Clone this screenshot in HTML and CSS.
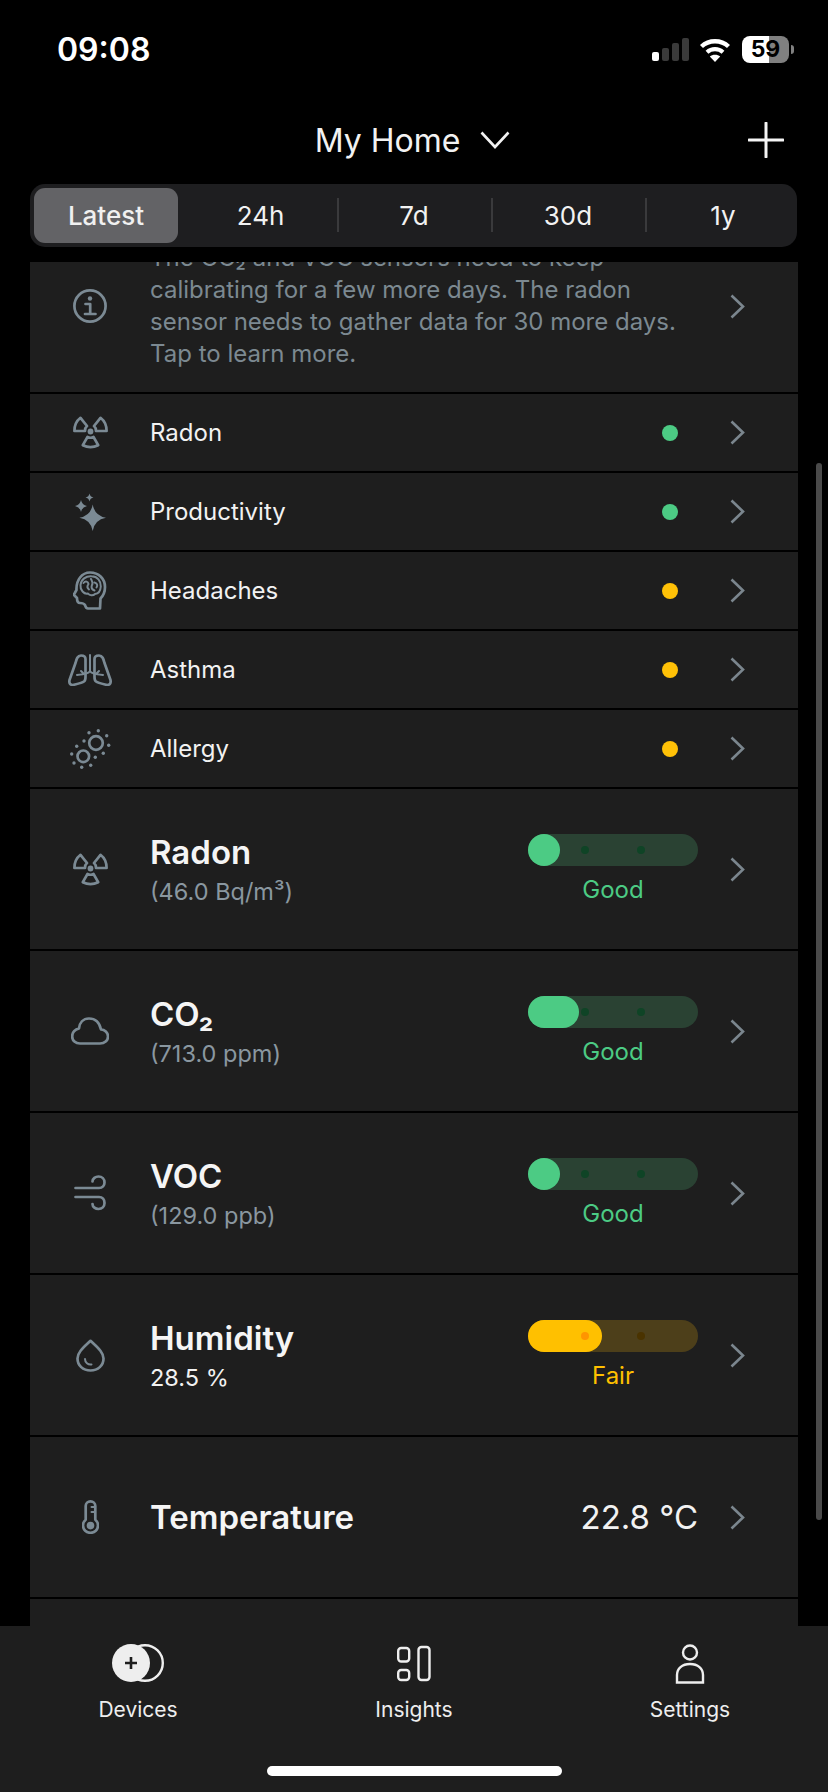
FILE: index.html
```html
<!DOCTYPE html>
<html lang="en">
<head>
  <meta charset="UTF-8" />
  <meta name="viewport" content="width=device-width, initial-scale=1" />
  <title>My Home</title>
  <link rel="stylesheet" href="styles.css">
</head>
<body>
  <div class="status-bar">
    <span class="time">09:08</span>
    <div class="status-icons">
      <svg class="signal" width="37" height="24" viewBox="0 0 37 24">
        <rect x="0" y="14" width="7" height="9" rx="2" fill="#fff" />
        <rect x="10" y="10" width="7" height="13" rx="2" fill="#3a3a3a" />
        <rect x="20" y="5" width="7" height="18" rx="2" fill="#3a3a3a" />
        <rect x="30" y="0" width="7" height="23" rx="2" fill="#3a3a3a" />
      </svg>
      <svg class="wifi" width="32" height="24" viewBox="0 0 32 24">
        <path d="M2.5 8.5C10 1.5 22 1.5 29.5 8.5" fill="none" stroke="#fff" stroke-width="4.4" />
        <path d="M8 14.2C12.5 10.2 19.5 10.2 24 14.2" fill="none" stroke="#fff" stroke-width="4.2" />
        <path d="M16 24L10.8 18.6C13.6 16.2 18.4 16.2 21.2 18.6Z" fill="#fff" />
      </svg>
      <div class="battery"><span class="battery-level">59</span></div>
      <div class="battery-nub"></div>
    </div>
  </div>

  <header class="header">
    <div class="home-picker">
      <span>My Home</span>
      <svg width="30" height="18" viewBox="0 0 30 18"><path d="M1.5 1.5L15 16L28.5 1.5" fill="none" stroke="#f2f2f2" stroke-width="2.6" /></svg>
    </div>
    <svg class="add-btn" width="36" height="36" viewBox="0 0 36 36"><path d="M18 1V35M1 18H35" stroke="#f5f5f5" stroke-width="3" stroke-linecap="round" /></svg>
  </header>

  <nav class="segments">
    <div class="segment active">Latest</div>
    <div class="segment first-range">24h</div>
    <div class="segment divided">7d</div>
    <div class="segment divided">30d</div>
    <div class="segment divided last-range">1y</div>
  </nav>

  <main class="list">
    <div class="row info-row">
      <div class="icon">
        <svg width="36" height="36" viewBox="0 0 36 36" class="line-icon">
          <circle cx="18" cy="18" r="15.6" />
          <circle cx="18" cy="10.5" r="2.2" class="solid" />
          <path d="M13.5 16H18.2V26M13 26H23.5" />
        </svg>
      </div>
      <p class="info-text">The CO₂ and VOC sensors need to keep calibrating for a few more days. The radon sensor needs to gather data for 30 more days. Tap to learn more.</p>
      <svg class="chevron" width="15" height="25" viewBox="0 0 15 25"><path d="M1.5 1.5L13 12.5L1.5 23.5" /></svg>
    </div>

    <div class="row small-row">
      <div class="icon">
        <svg width="35" height="33" viewBox="0 0 35 33" class="line-icon">
          <path d="M1.4 15C1.4 9.5 3.7 4.7 7.5 1.8L14 10C12.8 11 12 13 12 15Z" />
          <path d="M33.6 15C33.6 9.5 31.3 4.7 27.5 1.8L21 10C22.2 11 23 13 23 15Z" />
          <path d="M9.8 29.2L14.5 21C16.5 22 18.5 22 20.5 21L25.2 29.2C20 31.8 15 31.8 9.8 29.2Z" />
          <circle cx="17.5" cy="15.5" r="2.9" class="solid" />
        </svg>
      </div>
      <span class="row-label">Radon</span>
      <span class="dot good"></span>
      <svg class="chevron" width="15" height="25" viewBox="0 0 15 25"><path d="M1.5 1.5L13 12.5L1.5 23.5" /></svg>
    </div>

    <div class="row small-row">
      <div class="icon">
        <svg width="31" height="38" viewBox="0 0 31 38" class="line-icon">
          <path class="solid" d="M17.7 11.4Q19.6 22.8 31 24.7Q19.6 26.6 17.7 38Q15.8 26.6 4.4 24.7Q15.8 22.8 17.7 11.4Z" />
          <path class="solid" d="M6 7Q7 12 12 13Q7 14 6 19Q5 14 0 13Q5 12 6 7Z" />
          <path class="solid" d="M14.5 .5Q15.2 3.8 18.5 4.5Q15.2 5.2 14.5 8.5Q13.8 5.2 10.5 4.5Q13.8 3.8 14.5 .5Z" />
        </svg>
      </div>
      <span class="row-label">Productivity</span>
      <span class="dot good"></span>
      <svg class="chevron" width="15" height="25" viewBox="0 0 15 25"><path d="M1.5 1.5L13 12.5L1.5 23.5" /></svg>
    </div>

    <div class="row small-row">
      <div class="icon">
        <svg width="34" height="39" viewBox="0 0 34 39" class="line-icon">
          <path d="M27 37.5H15C13 37.5 12.5 36 12 34C11 32.5 9.5 32 7 32C4.5 32 4 30 4 27L1.5 24.5C.8 23.8 1 23 1.8 22L3.5 19C3 9 9 1.5 17 1.5C26 1.5 32 8 32 16C32 21 30 25 27.5 27.5Z" />
          <path class="thin" d="M7.5 14C8 8.5 13 4.8 18.5 5.2C24.5 5.2 28 10 27.8 15.5C27.5 19.5 25.5 22.8 22 23C20 25 16.5 24.5 15 22.5C11 23.5 7 19 7.5 14Z" />
          <path class="thin" d="M10.5 12C12.5 9.5 15 10.5 15.5 13C14 15 13.5 16.5 16 18.5M18 8C19.5 11 20.5 12 18.8 14.5C18 17 19 18.5 21.5 19.5M21.5 11.5C24 12 25 14.5 23.5 16.5" />
        </svg>
      </div>
      <span class="row-label">Headaches</span>
      <span class="dot fair"></span>
      <svg class="chevron" width="15" height="25" viewBox="0 0 15 25"><path d="M1.5 1.5L13 12.5L1.5 23.5" /></svg>
    </div>

    <div class="row small-row">
      <div class="icon">
        <svg width="44" height="32" viewBox="0 0 44 32" class="line-icon">
          <path d="M13 1.5C9.5 1.5 8.5 5 7.5 9L1.5 26C.8 29.5 2.5 31 5 31C9 30 14 29 16 27.5C17.5 26.5 17.5 25 17.5 23V5C17.5 2.5 15.5 1.5 13 1.5Z" />
          <path d="M31 1.5C34.5 1.5 35.5 5 36.5 9L42.5 26C43.2 29.5 41.5 31 39 31C35 30 30 29 28 27.5C26.5 26.5 26.5 25 26.5 23V5C26.5 2.5 28.5 1.5 31 1.5Z" />
          <path class="thin" d="M22 1V17C21 19.5 17 20 9 21M13 17L16 20M22 17C23 19.5 27 20 35 21M31 17L28 20" />
        </svg>
      </div>
      <span class="row-label">Asthma</span>
      <span class="dot fair"></span>
      <svg class="chevron" width="15" height="25" viewBox="0 0 15 25"><path d="M1.5 1.5L13 12.5L1.5 23.5" /></svg>
    </div>

    <div class="row small-row">
      <div class="icon">
        <svg width="41" height="40" viewBox="0 0 41 40" class="line-icon">
          <circle cx="26" cy="14" r="6.8" />
          <circle cx="13.3" cy="27.3" r="5.8" />
          <g class="solid">
            <circle cx="28.3" cy="1.7" r="1.7" /><circle cx="36.7" cy="6.7" r="1.7" /><circle cx="38.7" cy="16.3" r="1.7" />
            <circle cx="33.3" cy="24.3" r="1.7" /><circle cx="25.3" cy="28.3" r="1.7" /><circle cx="14" cy="12" r="1.7" />
            <circle cx="19" cy="3.7" r="1.7" /><circle cx="6.7" cy="17.3" r="1.7" /><circle cx="1.7" cy="25" r="1.7" />
            <circle cx="4" cy="34" r="1.7" /><circle cx="11.7" cy="38.3" r="1.7" /><circle cx="20.7" cy="36.3" r="1.7" />
          </g>
        </svg>
      </div>
      <span class="row-label">Allergy</span>
      <span class="dot fair"></span>
      <svg class="chevron" width="15" height="25" viewBox="0 0 15 25"><path d="M1.5 1.5L13 12.5L1.5 23.5" /></svg>
    </div>

    <div class="row big-row">
      <div class="icon">
        <svg width="35" height="33" viewBox="0 0 35 33" class="line-icon">
          <path d="M1.4 15C1.4 9.5 3.7 4.7 7.5 1.8L14 10C12.8 11 12 13 12 15Z" />
          <path d="M33.6 15C33.6 9.5 31.3 4.7 27.5 1.8L21 10C22.2 11 23 13 23 15Z" />
          <path d="M9.8 29.2L14.5 21C16.5 22 18.5 22 20.5 21L25.2 29.2C20 31.8 15 31.8 9.8 29.2Z" />
          <circle cx="17.5" cy="15.5" r="2.9" class="solid" />
        </svg>
      </div>
      <div class="reading">
        <div class="reading-name">Radon</div>
        <div class="reading-value">(46.0 Bq/m³)</div>
      </div>
      <div class="gauge good">
        <div class="track">
          <div class="fill" style="width: 32px"></div>
          <span class="tick tick-a"></span><span class="tick tick-b"></span>
        </div>
        <div class="gauge-label">Good</div>
      </div>
      <svg class="chevron" width="15" height="25" viewBox="0 0 15 25"><path d="M1.5 1.5L13 12.5L1.5 23.5" /></svg>
    </div>

    <div class="row big-row">
      <div class="icon">
        <svg width="38" height="28" viewBox="0 0 38 28" class="line-icon">
          <path d="M9 26.5H29C33.5 26.5 37 23.5 37 19.5C37 15.5 33.5 12.5 30 12.5C28.5 5.5 24 1.5 18 1.5C12 1.5 8.5 6 8 11.5C4 12.5 1.2 15.5 1.2 19.5C1.2 23.5 4.5 26.5 9 26.5Z" />
        </svg>
      </div>
      <div class="reading">
        <div class="reading-name">CO₂</div>
        <div class="reading-value">(713.0 ppm)</div>
      </div>
      <div class="gauge good">
        <div class="track">
          <div class="fill" style="width: 51px"></div>
          <span class="tick tick-a"></span><span class="tick tick-b"></span>
        </div>
        <div class="gauge-label">Good</div>
      </div>
      <svg class="chevron" width="15" height="25" viewBox="0 0 15 25"><path d="M1.5 1.5L13 12.5L1.5 23.5" /></svg>
    </div>

    <div class="row big-row">
      <div class="icon">
        <svg width="32" height="36" viewBox="0 0 32 36" class="line-icon">
          <path d="M1.5 13H25C28.5 13 30.5 10.5 30.5 7.5C30.5 4 28 1.5 24.5 1.5C21.5 1.5 18.5 3.5 18.5 6.5" />
          <path d="M1.5 22H25C28.5 22 30.5 24.5 30.5 28C30.5 31.5 28 34 24.5 34C21.5 34 18.5 32 18.5 29" />
        </svg>
      </div>
      <div class="reading">
        <div class="reading-name">VOC</div>
        <div class="reading-value">(129.0 ppb)</div>
      </div>
      <div class="gauge good">
        <div class="track">
          <div class="fill" style="width: 32px"></div>
          <span class="tick tick-a"></span><span class="tick tick-b"></span>
        </div>
        <div class="gauge-label">Good</div>
      </div>
      <svg class="chevron" width="15" height="25" viewBox="0 0 15 25"><path d="M1.5 1.5L13 12.5L1.5 23.5" /></svg>
    </div>

    <div class="row big-row">
      <div class="icon">
        <svg width="29" height="33" viewBox="0 0 29 33" class="line-icon">
          <path d="M14.5 1.8C8 8 1.5 13 1.5 19.5C1.5 26.5 7 31.5 14.5 31.5C22 31.5 27.5 26.5 27.5 19.5C27.5 13 21 8 14.5 1.8Z" />
          <path class="thin" d="M9 20C9 23.5 12 26 15.5 25.5" />
        </svg>
      </div>
      <div class="reading">
        <div class="reading-name">Humidity</div>
        <div class="reading-value plain">28.5 %</div>
      </div>
      <div class="gauge fair">
        <div class="track">
          <div class="fill" style="width: 74px"></div>
          <span class="tick tick-a on-fill"></span><span class="tick tick-b"></span>
        </div>
        <div class="gauge-label">Fair</div>
      </div>
      <svg class="chevron" width="15" height="25" viewBox="0 0 15 25"><path d="M1.5 1.5L13 12.5L1.5 23.5" /></svg>
    </div>

    <div class="row big-row">
      <div class="icon">
        <svg width="17" height="34" viewBox="0 0 17 34" class="line-icon">
          <path d="M3.7 19.7V6C3.7 3.2 5.8 1.4 8.5 1.4C11.2 1.4 13.3 3.2 13.3 6V19.7C15 21 16 23.2 16 25.6C16 29.6 12.6 32.8 8.5 32.8C4.4 32.8 1 29.6 1 25.6C1 23.2 2 21 3.7 19.7Z" />
          <circle cx="8.5" cy="25.6" r="3.8" class="solid" />
          <path class="thin" d="M9.5 7H13M9.5 12H13" />
        </svg>
      </div>
      <div class="reading">
        <div class="reading-name">Temperature</div>
      </div>
      <div class="temp-value">22.8 °C</div>
      <svg class="chevron" width="15" height="25" viewBox="0 0 15 25"><path d="M1.5 1.5L13 12.5L1.5 23.5" /></svg>
    </div>

    <div class="row big-row"></div>
  </main>

  <div class="scrollbar"></div>

  <footer class="tab-bar">
    <div class="tabs">
      <div class="tab">
        <svg width="52" height="38" viewBox="0 0 52 38">
          <circle cx="33" cy="19" r="17.8" fill="none" stroke="#eee" stroke-width="2.4" />
          <circle cx="19" cy="19" r="19" fill="#eee" />
          <path d="M19 13V25M13 19H25" stroke="#1e1e1e" stroke-width="2.6" />
        </svg>
        <span>Devices</span>
      </div>
      <div class="tab">
        <svg width="34" height="38" viewBox="0 0 34 38" fill="none" stroke="#eee" stroke-width="2.4">
          <rect x="1.2" y="4" width="11" height="13.5" rx="3" />
          <rect x="1.2" y="26" width="11" height="10" rx="3" />
          <rect x="21.5" y="3" width="11" height="33" rx="3" />
        </svg>
        <span>Insights</span>
      </div>
      <div class="tab">
        <svg width="30" height="40" viewBox="0 0 30 40" fill="none" stroke="#eee" stroke-width="2.4">
          <circle cx="15" cy="8.5" r="7" />
          <path d="M2 38.5V31C2 24.5 7 20 15 20C23 20 28 24.5 28 31V38.5Z" />
        </svg>
        <span>Settings</span>
      </div>
    </div>
    <div class="home-indicator"></div>
  </footer>
</body>
</html>
```

FILE: styles.css
```css
* {
  box-sizing: border-box;
}
html, body {
  margin: 0;
  height: 100%;
}
body {
  width: 828px;
  height: 1792px;
  overflow: hidden;
  display: flex;
  flex-direction: column;
  position: relative;
  background: #000;
  color: #f2f2f2;
  font-family: Inter, "Noto Sans", sans-serif;
}

/* Status bar */
.status-bar {
  height: 100px;
  flex: none;
  display: flex;
  justify-content: space-between;
  align-items: flex-start;
  padding: 31px 34px 0 57px;
}
.time {
  font-size: 32px;
  font-weight: 600;
  line-height: 38px;
  color: #fff;
}
.status-icons {
  display: flex;
  align-items: center;
  padding-top: 5px;
}
.signal {
  margin-right: 10px;
}
.wifi {
  margin-right: 11px;
}
.battery {
  width: 47px;
  height: 27px;
  border-radius: 8px;
  background: linear-gradient(to right, #fff 27px, #808080 27px);
  text-align: center;
}
.battery-level {
  font-size: 23px;
  font-weight: 700;
  line-height: 27px;
  color: #000;
  display: block;
}
.battery-nub {
  width: 3px;
  height: 9px;
  margin-left: 2px;
  border-radius: 0 3px 3px 0;
  background: #808080;
}

/* Header */
.header {
  height: 84px;
  flex: none;
  padding-bottom: 4px;
  display: flex;
  align-items: center;
  justify-content: center;
  position: relative;
}
.home-picker {
  display: flex;
  align-items: center;
  gap: 20px;
  font-size: 32px;
  color: #f2f2f2;
  margin-left: -3px;
}
.add-btn {
  position: absolute;
  right: 44px;
  top: 22px;
}

/* Time range tabs */
.segments {
  flex: none;
  height: 63px;
  margin: 0 31px 0 30px;
  padding: 4px;
  display: grid;
  grid-template-columns: 144px 159px 154px 154px 1fr;
  background: #1e1e20;
  border-radius: 15px;
}
.segment {
  display: flex;
  align-items: center;
  justify-content: center;
  font-size: 26px;
  color: #f2f2f2;
  position: relative;
}
.segment.active {
  background: #636366;
  border-radius: 11px;
  color: #f0f0f0;
  font-weight: 500;
}
.segment.first-range {
  padding-left: 6px;
}
.segment.last-range {
  padding-left: 8px;
}
.segment.divided::before {
  content: "";
  position: absolute;
  left: 0;
  top: 10px;
  bottom: 11px;
  width: 2px;
  background: #3a3a3c;
}

/* List */
.list {
  flex: 1;
  min-height: 0;
  margin: 15px 30px 0;
  overflow: hidden;
}
.row {
  display: flex;
  align-items: center;
  background: #1e1e1e;
  padding-right: 53px;
  margin-bottom: 2px;
}
.icon {
  width: 120px;
  flex: none;
  display: flex;
  justify-content: center;
}
.line-icon {
  fill: none;
  stroke: #7b8a94;
  stroke-width: 2.7;
  stroke-linejoin: round;
  stroke-linecap: round;
  display: block;
}
.line-icon .solid {
  fill: #7b8a94;
  stroke: none;
}
.line-icon .thin {
  stroke-width: 2;
}
.chevron {
  flex: none;
  fill: none;
  stroke: #7b868e;
  stroke-width: 2.6;
  margin-left: 32px;
}

.info-row {
  height: 172px;
  margin-top: -42px;
}
.info-text {
  flex: 1;
  margin: 0;
  font-size: 24px;
  line-height: 32px;
  color: #7c8991;
}
.info-row .chevron {
  margin-left: 42px;
}

.small-row {
  height: 77px;
}
.row-label {
  flex: 1;
  font-size: 24px;
  color: #f2f2f2;
}
.dot {
  width: 16px;
  height: 16px;
  border-radius: 50%;
}
.dot.good {
  background: #4ccb84;
}
.dot.fair {
  background: #ffc107;
}
.small-row .chevron {
  margin-left: 52px;
}

.big-row {
  height: 160px;
}
.reading {
  flex: 1;
}
.reading-name {
  font-size: 33px;
  font-weight: 600;
  line-height: 40px;
  color: #f5f5f5;
}
.reading-value {
  font-size: 23.5px;
  line-height: 30px;
  margin-top: 5px;
  color: #8a97a0;
}
.reading-value.plain {
  color: #f2f2f2;
}
.temp-value {
  font-size: 33px;
  color: #f2f2f2;
}

/* Gauge */
.gauge {
  width: 170px;
  flex: none;
  text-align: center;
}
.track {
  height: 32px;
  border-radius: 16px;
  position: relative;
}
.fill {
  height: 32px;
  border-radius: 16px;
}
.tick {
  position: absolute;
  top: 12px;
  width: 8px;
  height: 8px;
  border-radius: 50%;
}
.tick-a {
  left: 53px;
}
.tick-b {
  left: 109px;
}
.gauge-label {
  font-size: 24px;
  line-height: 28px;
  margin-top: 10px;
}
.gauge.good .track {
  background: #2a4233;
}
.gauge.good .fill {
  background: #4ccb84;
}
.gauge.good .tick {
  background: #0f4426;
}
.gauge.good .gauge-label {
  color: #4ccb84;
}
.gauge.fair .track {
  background: #4d3f1a;
}
.gauge.fair .fill {
  background: #ffc000;
}
.gauge.fair .tick {
  background: #4a3300;
}
.gauge.fair .tick.on-fill {
  background: #ff9500;
}
.gauge.fair .gauge-label {
  color: #ffc000;
}

.scrollbar {
  position: absolute;
  left: 816px;
  top: 463px;
  width: 6px;
  height: 1057px;
  border-radius: 3px;
  background: #4a4a4a;
}

/* Bottom tabs */
.tab-bar {
  flex: none;
  height: 166px;
  background: #1e1e1e;
  position: relative;
}
.tabs {
  display: grid;
  grid-template-columns: repeat(3, 1fr);
  padding-top: 18px;
}
.tab {
  display: flex;
  flex-direction: column;
  align-items: center;
  height: 78px;
  justify-content: space-between;
  font-size: 21px;
  color: #eee;
}
.tab svg {
  flex: none;
}
.home-indicator {
  width: 295px;
  height: 10px;
  margin: 44px auto 0 267px;
  border-radius: 5px;
  background: #fff;
}
```
